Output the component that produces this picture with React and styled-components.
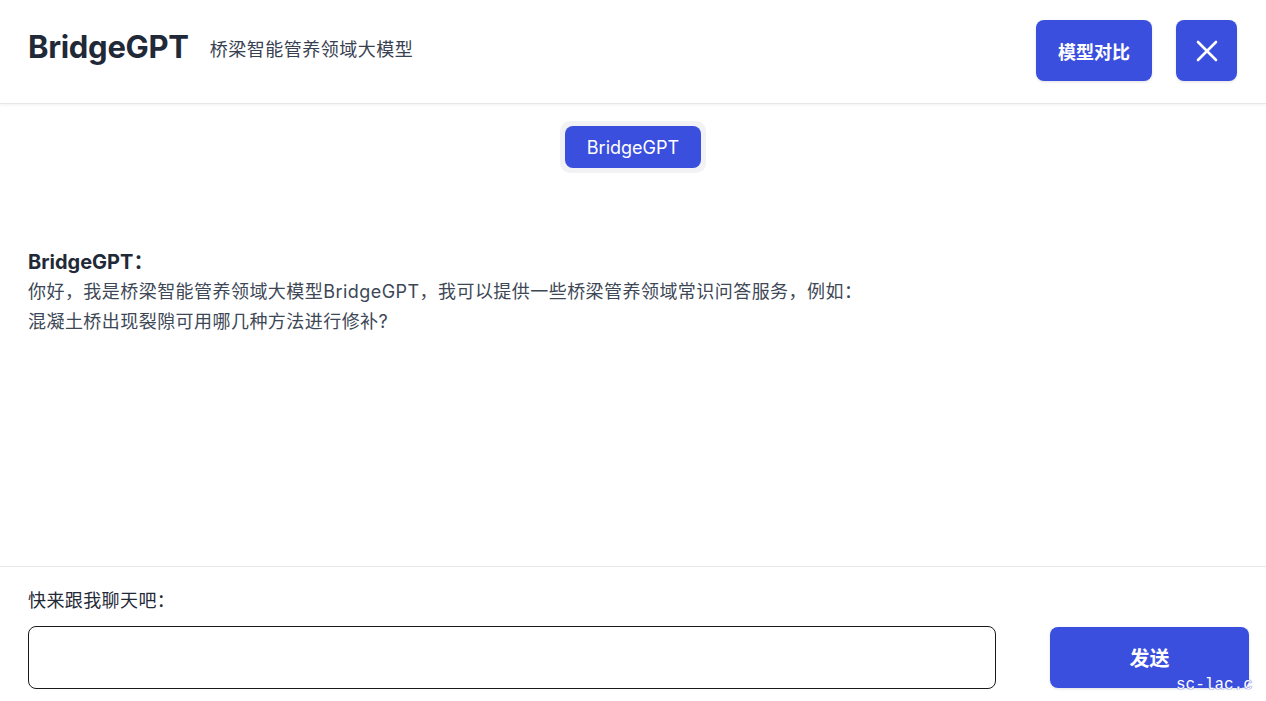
import React, { useState } from 'react';
import styled, { createGlobalStyle } from 'styled-components';

const GlobalStyle = createGlobalStyle`
  html, body {
    margin: 0;
    padding: 0;
    background: #fff;
  }
  body {
    font-family: Inter, "Noto Sans CJK SC", sans-serif;
    color: #1f2937;
  }
  * {
    box-sizing: border-box;
  }
`;

const BLUE = '#3b4fde';

const App = () => {
  const [text, setText] = useState('');
  return (
    <Page>
      <GlobalStyle />
      <Header>
        <Brand>
          <Title>BridgeGPT</Title>
          <Subtitle>桥梁智能管养领域大模型</Subtitle>
        </Brand>
        <Actions>
          <PrimaryButton>模型对比</PrimaryButton>
          <CloseButton aria-label="close">
            <svg width="22" height="22" viewBox="0 0 22 22" fill="none">
              <path d="M2 2L20 20M20 2L2 20" stroke="#fff" strokeWidth="2.6" strokeLinecap="round" />
            </svg>
          </CloseButton>
        </Actions>
      </Header>

      <Tabs>
        <TabGroup>
          <Tab>BridgeGPT</Tab>
        </TabGroup>
      </Tabs>

      <Chat>
        <Speaker>BridgeGPT：</Speaker>
        <Line>你好，我是桥梁智能管养领域大模型BridgeGPT，我可以提供一些桥梁管养领域常识问答服务，例如：</Line>
        <Line>混凝土桥出现裂隙可用哪几种方法进行修补?</Line>
      </Chat>

      <Footer>
        <Label>快来跟我聊天吧：</Label>
        <InputRow>
          <TextBox value={text} onChange={(e) => setText(e.target.value)} />
          <SendButton>发送</SendButton>
        </InputRow>
      </Footer>

      <Watermark>sc-lac.c</Watermark>
    </Page>
  );
};

const Page = styled.div`
  position: relative;
  height: 701px;
  display: flex;
  flex-direction: column;
  overflow: hidden;
`;

const Header = styled.header`
  height: 104px;
  flex-shrink: 0;
  display: flex;
  align-items: center;
  justify-content: space-between;
  padding: 0 29px 2px 28px;
  border-bottom: 1px solid #e7e7ea;
  box-shadow: 0 1px 3px rgba(0, 0, 0, 0.06);
`;

const Brand = styled.div`
  display: flex;
  align-items: baseline;
  gap: 21px;
  margin-bottom: 9px;
`;

const Title = styled.h1`
  margin: 0;
  font-size: 31px;
  font-weight: 700;
  letter-spacing: -0.3px;
  color: #1f2937;
`;

const Subtitle = styled.span`
  font-size: 18px;
  letter-spacing: 0.5px;
  color: #374151;
  position: relative;
  top: -2px;
`;

const Actions = styled.div`
  display: flex;
  gap: 24px;
`;

const PrimaryButton = styled.button`
  height: 61px;
  padding: 0 22px;
  border: none;
  border-radius: 8px;
  background: ${BLUE};
  color: #fff;
  font-family: inherit;
  font-size: 18px;
  font-weight: 700;
  box-shadow: 0 1px 3px rgba(0, 0, 0, 0.12);
  cursor: pointer;
`;

const CloseButton = styled(PrimaryButton)`
  width: 61px;
  padding: 0;
  display: flex;
  align-items: center;
  justify-content: center;
`;

const Tabs = styled.div`
  display: flex;
  justify-content: center;
  padding-top: 17px;
`;

const TabGroup = styled.div`
  padding: 5px;
  border-radius: 10px;
  background: #f2f2f4;
`;

const Tab = styled.button`
  height: 42px;
  width: 136px;
  border: none;
  border-radius: 8px;
  background: ${BLUE};
  color: #fff;
  font-family: inherit;
  font-size: 18px;
  cursor: pointer;
`;

const Chat = styled.section`
  flex: 1;
  padding: 74px 28px 0;
`;

const Speaker = styled.div`
  font-size: 20px;
  font-weight: 700;
  line-height: 30px;
  color: #1f2937;
`;

const Line = styled.p`
  margin: 0;
  font-size: 18px;
  line-height: 30px;
  letter-spacing: 0.45px;
  color: #3d4756;
`;

const Footer = styled.footer`
  flex-shrink: 0;
  height: 135px;
  border-top: 1px solid #e8e8ea;
  padding: 21px 17px 0 28px;
`;

const Label = styled.div`
  font-size: 18px;
  line-height: 26px;
  letter-spacing: 0.4px;
  color: #1f2937;
  margin-bottom: 12px;
`;

const InputRow = styled.div`
  display: flex;
  align-items: flex-start;
  justify-content: space-between;
`;

const TextBox = styled.input`
  width: 968px;
  height: 63px;
  border: 1px solid #1a1a1a;
  border-radius: 8px;
  padding: 0 14px;
  font-family: inherit;
  font-size: 18px;
  outline: none;
`;

const SendButton = styled(PrimaryButton)`
  width: 199px;
  height: 61px;
  margin-top: 1px;
  font-size: 20px;
`;

const Watermark = styled.span`
  position: absolute;
  right: 0;
  bottom: 8px;
  width: 90px;
  overflow: hidden;
  white-space: nowrap;
  font-family: "Liberation Mono", monospace;
  font-size: 16px;
  line-height: 16px;
  color: #fff;
  text-shadow: 0 0 1px ${BLUE}, 0 0 1px ${BLUE};
`;

export default App;
